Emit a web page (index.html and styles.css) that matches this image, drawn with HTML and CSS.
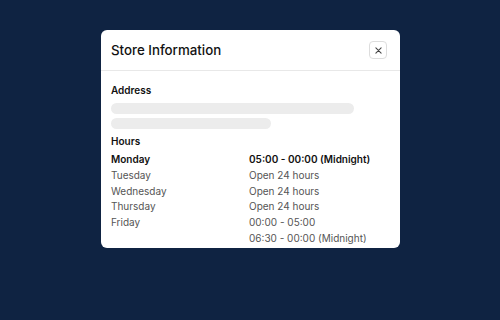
FILE: index.html
```html
<!DOCTYPE html>
<html lang="en">
<head>
  <meta charset="UTF-8">
  <title>Store Information</title>
  <link rel="stylesheet" href="styles.css">
</head>
<body>

  <div class="modal">
    <header class="modal-header">
      <h1>Store Information</h1>
      <button class="close-btn" aria-label="Close">
        <svg width="7" height="7" viewBox="0 0 8 8">
          <path d="M1 1L7 7M7 1L1 7" stroke="#444" stroke-width="1.2" stroke-linecap="round"/>
        </svg>
      </button>
    </header>

    <section class="modal-body">
      <h2>Address</h2>
      <div class="skeleton long"></div>
      <div class="skeleton short"></div>

      <h2 class="hours-title">Hours</h2>
      <div class="hours">
        <span class="day today">Monday</span>
        <span class="time today">05:00 - 00:00 (Midnight)</span>
        <span class="day">Tuesday</span>
        <span class="time">Open 24 hours</span>
        <span class="day">Wednesday</span>
        <span class="time">Open 24 hours</span>
        <span class="day">Thursday</span>
        <span class="time">Open 24 hours</span>
        <span class="day">Friday</span>
        <span class="time">00:00 - 05:00<br>06:30 - 00:00 (Midnight)</span>
      </div>
    </section>
  </div>

</body>
</html>
```

FILE: styles.css
```css
body {
  margin: 0;
  height: 320px;
  background: #0f2342;
  font-family: Inter, "Liberation Sans", sans-serif;
  color: #111;
  overflow: hidden;
}

.modal {
  width: 299px;
  margin: 30px 0 0 101px;
  height: 218px;
  background: #fff;
  border-radius: 6px;
  overflow: hidden;
}

.modal-header {
  display: flex;
  align-items: center;
  justify-content: space-between;
  height: 40px;
  padding: 0 13px 0 10px;
  border-bottom: 1px solid #e8e8e8;
}

.modal-header h1 {
  margin: 0;
  font-size: 13.3px;
  font-weight: 500;
}

.close-btn {
  width: 18px;
  height: 18px;
  padding: 0;
  display: flex;
  align-items: center;
  justify-content: center;
  background: #fff;
  border: 1px solid #ddd;
  border-radius: 4px;
}

.modal-body {
  padding: 13px 10px;
}

h2 {
  margin: 0 0 7px;
  font-size: 10px;
  font-weight: 600;
}

.skeleton {
  height: 11px;
  border-radius: 6px;
  background: #ececec;
  margin-bottom: 4px;
}

.skeleton.long {
  width: 243px;
}

.skeleton.short {
  width: 160px;
}

.hours-title {
  margin-top: 6px;
  margin-bottom: 5px;
}

.hours {
  display: grid;
  grid-template-columns: 138px 1fr;
  font-size: 10px;
  line-height: 15.8px;
  color: #555;
}

.hours .today {
  color: #111;
  font-weight: 600;
}
```
